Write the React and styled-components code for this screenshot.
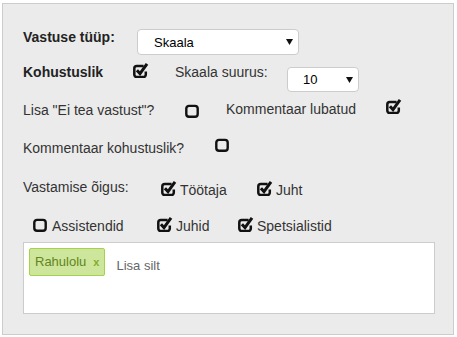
import React from 'react'
import styled, {createGlobalStyle} from 'styled-components'

const Global = createGlobalStyle`
  html, body { margin: 0; padding: 0; background: #fff; }
  body {
    font-family: "Liberation Sans", Arial, sans-serif;
    font-size: 14px;
    color: #333;
  }
  * { box-sizing: border-box; }
`

const Panel = styled.div`
  margin: 3px 0 0 2px;
  width: 452px;
  height: 332px;
  border: 1px solid #ccc;
  background: #ebebeb;
  padding: 25px 17px 0 20px;
`
const Row = styled.div`
  display: grid;
  grid-template-columns: ${p => p.cols};
  align-items: start;
  margin-top: ${p => p.gap || 0}px;
  padding-left: ${p => p.indent || 0}px;
`
const Label = styled.div`
  margin-top: ${p => p.dy || 0}px;
  line-height: 16px;
  white-space: nowrap;
  font-weight: ${p => (p.bold ? 700 : 400)};
  color: ${p => (p.bold ? '#222' : '#333')};
`
const IconCell = styled.div`
  display: flex;
  margin-top: ${p => p.dy || 0}px;
  svg { display: block; }
`
const OptionBox = styled.div`
  display: flex;
  align-items: flex-end;
  gap: 3px;
  height: 16px;
  margin-top: ${p => p.dy || 0}px;
  white-space: nowrap;
  svg { display: block; flex: none; }
`
const OptionText = styled.span`
  line-height: 16px;
  transform: translateY(2px);
`
const SelectBox = styled.div`
  width: ${p => p.w}px;
  height: ${p => p.h}px;
  margin-top: ${p => p.dy || 0}px;
  display: flex;
  align-items: center;
  justify-content: space-between;
  padding: 0 5px 0 ${p => p.pad}px;
  background: #fff;
  border: 1px solid #ccc;
  border-radius: 4px;
  font-size: 13px;
  color: #000;
  svg { display: block; }
`
const TagBox = styled.div`
  display: flex;
  align-items: flex-start;
  width: 412px;
  height: 72px;
  margin-top: 10px;
  padding: 5px;
  background: #fff;
  border: 1px solid #ccc;
`
const Tag = styled.span`
  display: inline-flex;
  align-items: baseline;
  padding: 5px;
  margin-right: 5px;
  border: 1px solid #a5d24a;
  border-radius: 2px;
  background: #cde69c;
  color: #638421;
  font-size: 13px;
  line-height: 15px;
`
const TagRemove = styled.span`
  margin-left: 7px;
  font-size: 11px;
  font-weight: 700;
  color: #82ad2b;
`
const TagInput = styled.input`
  width: 90px;
  height: 15px;
  margin-top: 10px;
  padding: 0 6px;
  border: none;
  outline: none;
  background: transparent;
  font-family: "Liberation Sans", Arial, sans-serif;
  font-size: 13px;
  line-height: 15px;
  color: #666;
  &::placeholder { color: #666; opacity: 1; }
`

const CheckedIcon = () => (
  <svg width="16" height="16" viewBox="0 0 16 16">
    <path
      d="M10.6 3.9 H3.8 a2.5 2.5 0 0 0 -2.5 2.5 v6.2 a2.5 2.5 0 0 0 2.5 2.5 h6.5 a2.5 2.5 0 0 0 2.5 -2.5 v-3.2"
      fill="none"
      stroke="#111"
      strokeWidth="2.5"
    />
    <path d="M3.9 8.2 L7 11.6 L14 1.8" fill="none" stroke="#111" strokeWidth="3" />
  </svg>
)

const EmptyIcon = () => (
  <svg width="16" height="16" viewBox="0 0 16 16">
    <rect x="1.3" y="3.9" width="11.4" height="10.8" rx="2.7" fill="none" stroke="#111" strokeWidth="2.4" />
  </svg>
)

const Arrow = () => (
  <svg width="7" height="6" viewBox="0 0 7 6">
    <polygon points="0,0 7,0 3.5,6" fill="#111" />
  </svg>
)

const Check = ({on, dy}) => (
  <IconCell dy={dy}>{on ? <CheckedIcon /> : <EmptyIcon />}</IconCell>
)

const Option = ({on, dy, children}) => (
  <OptionBox dy={dy}>
    {on ? <CheckedIcon /> : <EmptyIcon />}
    <OptionText>{children}</OptionText>
  </OptionBox>
)

const Select = ({value, w, h, pad, dy}) => (
  <SelectBox w={w} h={h} pad={pad} dy={dy}>
    <span>{value}</span>
    <Arrow />
  </SelectBox>
)

const App = () => (
  <>
    <Global />
    <Panel>
      <Row cols="114px auto">
        <Label bold>Vastuse tüüp:</Label>
        <Select value="Skaala" w={162} h={26} pad={16} />
      </Row>

      <Row cols="110px 42px 112px auto" gap={9}>
        <Label bold>Kohustuslik</Label>
        <Check on dy={-2} />
        <Label>Skaala suurus:</Label>
        <Select value="10" w={72} h={25} pad={15} dy={3} />
      </Row>

      <Row cols="162px 41px 160px auto" gap={10}>
        <Label>Lisa "Ei tea vastust"?</Label>
        <Check dy={0} />
        <Label dy={-1}>Kommentaar lubatud</Label>
        <Check on dy={-4} />
      </Row>

      <Row cols="192px auto" gap={22}>
        <Label>Kommentaar kohustuslik?</Label>
        <Check dy={-4} />
      </Row>

      <Row cols="138px 96px auto" gap={23}>
        <Label>Vastamise õigus:</Label>
        <Option on dy={1}>Töötaja</Option>
        <Option on dy={1}>Juht</Option>
      </Row>

      <Row cols="124px 81px auto" gap={20} indent={10}>
        <Option>Assistendid</Option>
        <Option on>Juhid</Option>
        <Option on>Spetsialistid</Option>
      </Row>

      <TagBox>
        <Tag>
          Rahulolu
          <TagRemove>x</TagRemove>
        </Tag>
        <TagInput placeholder="Lisa silt" />
      </TagBox>
    </Panel>
  </>
)

export default App
